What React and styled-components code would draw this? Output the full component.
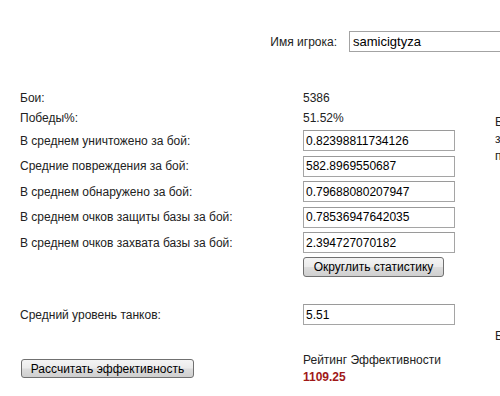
import React from "react";
import styled, { createGlobalStyle } from "styled-components";

const Global = createGlobalStyle`
  html, body { margin: 0; padding: 0; background: #fff; overflow: hidden; }
  body {
    font-family: "Liberation Sans", Arial, sans-serif;
    font-size: 12px;
    color: #222;
  }
`;

const Page = styled.div`
  width: 500px;
  height: 396px;
  overflow: hidden;
  display: flex;
  background: #fff;
`;

const Main = styled.div`
  flex: 0 0 495px;
  width: 495px;
  padding: 30px 0 0 20px;
  box-sizing: border-box;
  display: flex;
  flex-direction: column;
`;

const Side = styled.div`
  flex: 0 0 auto;
  padding-top: 114px;
  display: flex;
  flex-direction: column;
  line-height: 17px;
  white-space: nowrap;
`;

const SideBlock = styled.div`
  margin-top: ${(p) => p.$gap || 0}px;
`;

const NameRow = styled.div`
  display: grid;
  grid-template-columns: 329px 151px;
  align-items: center;
  height: 23px;
  white-space: nowrap;
`;

const NameLabel = styled.span`
  color: #222;
  justify-self: end;
  padding-right: 12px;
`;

const Label = styled.span`
  color: #222;
`;

const NameInput = styled.input`
  width: 151px;
  height: 21px;
  box-sizing: border-box;
  border: 1px solid #a3a3a3;
  border-right: none;
  padding: 0 3px;
  font-family: "Liberation Sans", Arial, sans-serif;
  font-size: 13px;
  color: #000;
  outline: none;
`;

const Row = styled.div`
  display: grid;
  grid-template-columns: 283px 152px;
  align-items: ${(p) => p.$align || "center"};
  height: ${(p) => p.$h}px;
  margin-top: ${(p) => p.$mt || 0}px;
  padding-top: ${(p) => p.$pt || 0}px;
  box-sizing: border-box;
`;

const Value = styled.span`
  color: #222;
`;

const Field = styled.input`
  width: 152px;
  height: 21px;
  box-sizing: border-box;
  border: 1px solid #a5a5a5;
  border-top-color: #9a9a9a;
  padding: 0 2px;
  font-family: "Liberation Sans", Arial, sans-serif;
  font-size: 12px;
  color: #000;
  outline: none;
`;

const Button = styled.button`
  height: ${(p) => p.$h || 20}px;
  width: ${(p) => p.$w}px;
  margin-top: ${(p) => p.$mt || 0}px;
  margin-left: ${(p) => p.$ml || 0}px;
  box-sizing: border-box;
  border: 1px solid #707070;
  border-radius: 3px;
  background: linear-gradient(#f4f4f4 0%, #ebebeb 48%, #dcdcdc 52%, #cfcfcf 100%);
  font-family: "Liberation Sans", Arial, sans-serif;
  font-size: 12px;
  color: #000;
  padding: 0;
  justify-self: start;
  cursor: pointer;
`;

const Rating = styled.div`
  display: flex;
  flex-direction: column;
  line-height: 17px;
  white-space: nowrap;
`;

const Score = styled.span`
  color: #a01818;
  font-weight: bold;
`;

export default function App() {
  const inputs = [
    ["В среднем уничтожено за бой:", "0.82398811734126"],
    ["Средние повреждения за бой:", "582.8969550687"],
    ["В среднем обнаружено за бой:", "0.79688080207947"],
    ["В среднем очков защиты базы за бой:", "0.78536947642035"],
    ["В среднем очков захвата базы за бой:", "2.394727070182"],
  ];
  return (
    <>
      <Global />
      <Page>
        <Main>
          <NameRow>
            <NameLabel>Имя игрока:</NameLabel>
            <NameInput defaultValue="samicigtyza" />
          </NameRow>
          <Row $h={20} $mt={35}>
            <Label>Бои:</Label>
            <Value>5386</Value>
          </Row>
          <Row $h={20}>
            <Label>Победы%:</Label>
            <Value>51.52%</Value>
          </Row>
          {inputs.map(([l, v]) => (
            <Row key={l} $h={25.5}>
              <Label>{l}</Label>
              <Field defaultValue={v} />
            </Row>
          ))}
          <Row $h={24} $align="start" $pt={1.5}>
            <span />
            <Button $w={141}>Округлить статистику</Button>
          </Row>
          <Row $h={25.5} $mt={22.5}>
            <Label>Средний уровень танков:</Label>
            <Field defaultValue="5.51" />
          </Row>
          <Row $h={40} $mt={24.5} $align="start">
            <Button $w={173} $h={19} $mt={7} $ml={1}>
              Рассчитать эффективность
            </Button>
            <Rating>
              <span>Рейтинг Эффективности</span>
              <Score>1109.25</Score>
            </Rating>
          </Row>
        </Main>
        <Side>
          <SideBlock>Б</SideBlock>
          <SideBlock>з</SideBlock>
          <SideBlock>п</SideBlock>
          <SideBlock $gap={163}>Б</SideBlock>
        </Side>
      </Page>
    </>
  );
}
